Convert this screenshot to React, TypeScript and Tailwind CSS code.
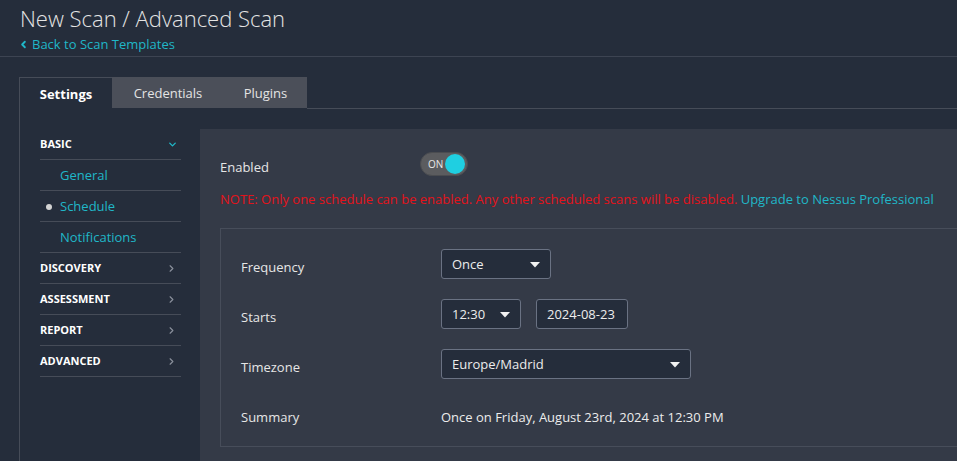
import { ChevronDown, ChevronLeft, ChevronRight } from 'lucide-react';

const subItems = [
  { label: 'General', active: false },
  { label: 'Schedule', active: true },
  { label: 'Notifications', active: false },
];

const sections = ['DISCOVERY', 'ASSESSMENT', 'REPORT', 'ADVANCED'];

function Caret() {
  return (
    <svg width="10" height="6" viewBox="0 0 10 6" className="shrink-0">
      <path d="M0 0 L10 0 L5 5.5 Z" fill="#f2f2f2" />
    </svg>
  );
}

function Select({ value, width }: { value: string; width: string }) {
  return (
    <div
      className={`${width} h-[30px] pt-[1px] flex items-center justify-between pl-[10px] pr-[10px] bg-[#252d3b] border border-[#6a7283] rounded-[3px] text-[13px] text-[#ececec]`}
    >
      <span>{value}</span>
      <Caret />
    </div>
  );
}

function Label({ children }: { children: string }) {
  return <div className="w-[200px] mt-[9px] text-[13px] leading-[18px] text-[#e6e6e6]">{children}</div>;
}

export default function App() {
  return (
    <div
      className="w-full h-[461px] overflow-hidden bg-[#252d3b] text-[#e6e6e6]"
      style={{ fontFamily: '"Open Sans", "DejaVu Sans", sans-serif' }}
    >
      {/* header */}
      <div className="h-[57px] px-5 border-b border-[#3d4452]">
        <h1 className="pt-[3px] text-[22px] leading-[30px] font-light text-[#e4e4e4]">
          New Scan / Advanced Scan
        </h1>
        <a className="flex items-center gap-[3px] text-[13px] leading-[18px] text-[#20b7c8] -ml-[2px] mt-[2px]">
          <ChevronLeft className="w-[11px] h-[11px]" strokeWidth={4} />
          Back to Scan Templates
        </a>
      </div>

      <div className="ml-[19px] mt-[20px]">
        {/* tabs */}
        <div className="flex h-[32px]">
          <div className="w-[93px] h-[32px] pt-[2px] border-l border-t border-[#464c58] flex items-center justify-center text-[13px] font-bold text-white">
            Settings
          </div>
          <div className="w-[112px] h-[31px] pt-[2px] bg-[#4b4f59] flex items-center justify-center text-[13px] text-[#e4e4e4]">
            Credentials
          </div>
          <div className="w-[83px] h-[31px] pt-[2px] bg-[#4b4f59] flex items-center justify-center text-[13px] text-[#e4e4e4]">
            Plugins
          </div>
          <div className="flex-1 border-b border-[#464c58]" />
        </div>

        {/* body */}
        <div className="flex border-l border-[#464c58] h-[360px]">
          <div className="w-[180px] shrink-0 pl-[20px] pt-[20px]">
            <div className="w-[141px]">
              <div className="h-[31px] flex items-center justify-between border-b border-[#464c58] text-[11px] font-bold text-white">
                BASIC
                <ChevronDown className="w-[11px] h-[11px] mr-[3px] text-[#20b7c8]" strokeWidth={3} />
              </div>
              {subItems.map((item) => (
                <div
                  key={item.label}
                  className="h-[31px] pt-[1px] flex items-center border-b border-[#464c58] text-[13px] text-[#20b7c8]"
                >
                  <span className="w-[20px] flex justify-center">
                    {item.active && <span className="w-[6px] h-[6px] rounded-full bg-[#d4d4d4] ml-[-2px]" />}
                  </span>
                  {item.label}
                </div>
              ))}
              {sections.map((s) => (
                <div
                  key={s}
                  className="h-[31px] flex items-center justify-between border-b border-[#464c58] text-[11px] font-bold text-white"
                >
                  {s}
                  <ChevronRight className="w-[11px] h-[11px] mr-[4px] text-[#8a909c]" strokeWidth={2.5} />
                </div>
              ))}
            </div>
          </div>

          {/* content panel */}
          <div className="flex-1 mt-[20px] bg-[#343a47] pl-[20px] pt-[23px] overflow-hidden">
            <div className="flex items-start h-[25px]">
              <div className="w-[200px] mt-[6px] text-[13px] leading-[18px] text-[#e6e6e6]">Enabled</div>
              <div className="w-[48px] h-[24px] rounded-full bg-[#5b5c5f] border border-[#4a4c50] flex items-center justify-between pl-[7px] pr-[2px]">
                <span className="text-[10px] text-[#e8e8e8]">ON</span>
                <span className="w-[20px] h-[20px] rounded-full bg-[#1fcfe1]" />
              </div>
            </div>
            <p className="mt-[12px] text-[13px] leading-[20px] whitespace-nowrap text-[#e3131b]">
              NOTE: Only one schedule can be enabled. Any other scheduled scans will be disabled.{' '}
              <a className="text-[#20b7c8]">Upgrade to Nessus Professional</a>
            </p>

            <div className="mt-[19px] w-[900px] h-[219px] border border-[#474d5a] pl-[20px] pt-[20px]">
              <div className="flex items-start h-[30px]">
                <Label>Frequency</Label>
                <Select value="Once" width="w-[110px]" />
              </div>
              <div className="flex items-start h-[30px] mt-[20px]">
                <Label>Starts</Label>
                <Select value="12:30" width="w-[80px]" />
                <div className="ml-[15px] w-[92px] h-[30px] pt-[1px] flex items-center pl-[10px] bg-[#252d3b] border border-[#6a7283] rounded-[3px] text-[13px] text-[#ececec]">
                  2024-08-23
                </div>
              </div>
              <div className="flex items-start h-[30px] mt-[20px]">
                <Label>Timezone</Label>
                <Select value="Europe/Madrid" width="w-[250px]" />
              </div>
              <div className="flex items-start h-[30px] mt-[20px]">
                <Label>Summary</Label>
                <div className="mt-[9px] text-[13px] leading-[18px] text-[#ececec]">
                  Once on Friday, August 23rd, 2024 at 12:30 PM
                </div>
              </div>
            </div>
          </div>
        </div>
      </div>
    </div>
  );
}
